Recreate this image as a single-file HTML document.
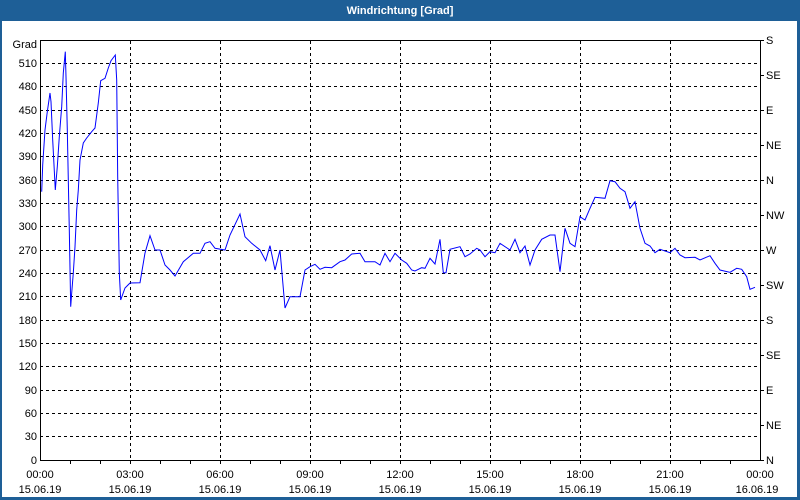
<!DOCTYPE html>
<html><head><meta charset="utf-8"><style>
html,body{margin:0;padding:0;background:#fff;}
svg{display:block;}
text{font-family:"Liberation Sans",sans-serif;font-size:11px;fill:#000;}
</style></head><body>
<svg width="800" height="500" xmlns="http://www.w3.org/2000/svg">
<rect x="0" y="0" width="800" height="500" fill="#1e5f97"/>
<rect x="2" y="21" width="795" height="476" fill="#fff"/>
<text x="400" y="14" text-anchor="middle" style="fill:#fff;font-weight:bold">Windrichtung [Grad]</text>
<g stroke="#000" stroke-width="1" stroke-dasharray="3,3" fill="none" shape-rendering="crispEdges">
<path d="M40 63.5H757M40 86.5H757M40 110.5H757M40 133.5H757M40 156.5H757M40 180.5H757M40 203.5H757M40 226.5H757M40 250.5H757M40 273.5H757M40 296.5H757M40 320.5H757M40 343.5H757M40 366.5H757M40 390.5H757M40 413.5H757M40 436.5H757"/>
<path d="M130.5 41V460M220.5 41V460M310.5 41V460M400.5 41V460M490.5 41V460M580.5 41V460M670.5 41V460"/>
</g>
<g stroke="#000" stroke-width="1" fill="none" shape-rendering="crispEdges">
<path d="M40.5 40V460.5H760.5V40M40 40.5H760.5"/>
<path d="M70.5 460v4M100.5 460v4M130.5 460v4M160.5 460v4M190.5 460v4M220.5 460v4M250.5 460v4M280.5 460v4M310.5 460v4M340.5 460v4M370.5 460v4M400.5 460v4M430.5 460v4M460.5 460v4M490.5 460v4M520.5 460v4M550.5 460v4M580.5 460v4M610.5 460v4M640.5 460v4M670.5 460v4M700.5 460v4M730.5 460v4"/>
<path d="M760 40.5h4M760 75.5h4M760 110.5h4M760 145.5h4M760 180.5h4M760 215.5h4M760 250.5h4M760 285.5h4M760 320.5h4M760 355.5h4M760 390.5h4M760 425.5h4M760 460.5h4"/>
</g>
<g text-anchor="end">
<text x="37" y="48">Grad</text>
<text x="37" y="67">510</text><text x="37" y="90">480</text><text x="37" y="114">450</text><text x="37" y="137">420</text><text x="37" y="160">390</text><text x="37" y="184">360</text><text x="37" y="207">330</text><text x="37" y="230">300</text><text x="37" y="254">270</text><text x="37" y="277">240</text><text x="37" y="300">210</text><text x="37" y="324">180</text><text x="37" y="347">150</text><text x="37" y="370">120</text><text x="37" y="394">90</text><text x="37" y="417">60</text><text x="37" y="440">30</text><text x="37" y="464">0</text>
</g>
<g>
<text x="766" y="44">S</text><text x="766" y="79">SE</text><text x="766" y="114">E</text><text x="766" y="149">NE</text><text x="766" y="184">N</text><text x="766" y="219">NW</text><text x="766" y="254">W</text><text x="766" y="289">SW</text><text x="766" y="324">S</text><text x="766" y="359">SE</text><text x="766" y="394">E</text><text x="766" y="429">NE</text><text x="766" y="464">N</text>
</g>
<g text-anchor="middle">
<text x="40" y="478">00:00</text><text x="130" y="478">03:00</text><text x="220" y="478">06:00</text><text x="310" y="478">09:00</text><text x="400" y="478">12:00</text><text x="490" y="478">15:00</text><text x="580" y="478">18:00</text><text x="670" y="478">21:00</text><text x="760" y="478">00:00</text>
<text x="40" y="493">15.06.19</text><text x="130" y="493">15.06.19</text><text x="220" y="493">15.06.19</text><text x="310" y="493">15.06.19</text><text x="400" y="493">15.06.19</text><text x="490" y="493">15.06.19</text><text x="580" y="493">15.06.19</text><text x="670" y="493">15.06.19</text><text x="757" y="493">16.06.19</text>
</g>
<polyline fill="none" stroke="#0000ff" stroke-width="1" points="41.7,191.7 42.7,165 45,130 47.3,111.7 50,93 51,101.7 52.7,140 55.3,190 57.3,166.7 59.3,136.7 61.7,106.7 63.3,73 65.3,51.7 66,76.7 67.3,130 69.3,230 70.7,306.7 71.7,293 73.3,273 75,246.7 76.7,210 78.3,190 80,160 83.3,143 86.7,138 91.7,131.7 95,128 98.3,103 100.7,80.7 105,78.3 108.3,68 111,60.7 115.3,55 116.7,80 117.7,176.7 119.3,273 120.7,300 125,288 130,283 140,282.7 145,253 150,235.7 155,250 160,250 165,265 170,270 175,276 183.3,261.7 193.3,253.3 200,253.3 205,243.3 210,241.7 215,248.3 225,250 230,235 240,214 245,236.7 251.7,243.3 260,250 265.7,260.7 270,245.7 275,270 280,250 285,308 290,296.7 300,296.7 305,270 310,266.7 315,264.3 320,269.3 325,267.3 331.7,267.7 340,261.7 345,260 351.7,254 360,253.3 365,261.7 375,261.7 380,265 385,253.3 390,261.7 395,253.3 401.7,260 406.7,263.3 411.7,270 415,271 421.7,267.7 425,268.3 430,258.3 435,264 440,239.3 443.3,272.7 446,272.7 450,249.3 460,246.7 465,256.7 470,254 476.7,248.3 480,250 485,256.7 490,251.7 495,252.7 500,243.3 510,250 515,239.3 520,252.7 525,246 530,265 535,250 541.7,239.3 550,235 555,235 560,271.7 565,228.3 570,243.3 575,246.7 580,216.7 585,220 590,208.3 595,197.3 605,198.3 610,180.7 615,181.7 620,188.3 625,191.7 630,208.3 635,201.7 640,228.3 645,243.3 650,246 655,252.7 660,249.3 670,252.7 675,248.3 680,255 685,257.7 695,257.3 700,260 710,255.7 715,263.3 720,270 730,272.3 736.7,268.3 741.7,269.3 746.7,276.7 750,289.3 755,287.3"/>
</svg>
</body></html>
